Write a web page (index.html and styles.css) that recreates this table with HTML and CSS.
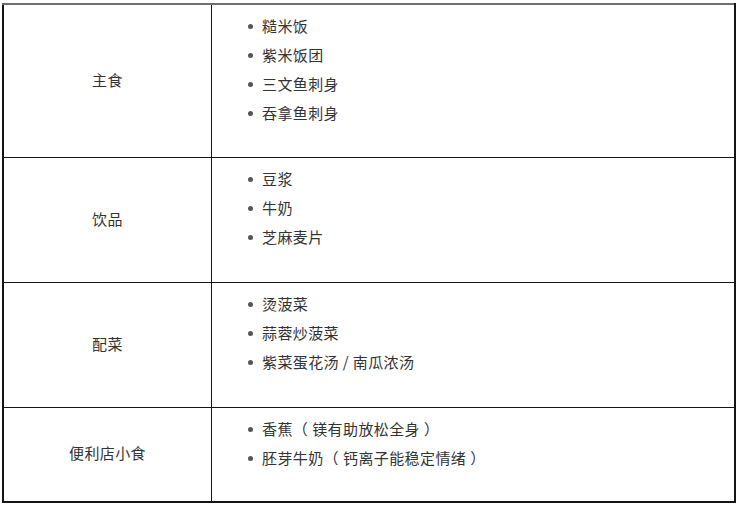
FILE: index.html
```html
<!DOCTYPE html>
<html lang="zh-CN">
<head>
<meta charset="utf-8">
<link rel="stylesheet" href="styles.css">
</head>
<body>
<div class="wrap">
<table class="menu">
  <tr>
    <td class="cat">主食</td>
    <td class="items">
      <ul class="first">
        <li>糙米饭</li>
        <li>紫米饭团</li>
        <li>三文鱼刺身</li>
        <li>吞拿鱼刺身</li>
      </ul>
    </td>
  </tr>
  <tr>
    <td class="cat">饮品</td>
    <td class="items">
      <ul>
        <li>豆浆</li>
        <li>牛奶</li>
        <li>芝麻麦片</li>
      </ul>
    </td>
  </tr>
  <tr>
    <td class="cat">配菜</td>
    <td class="items">
      <ul>
        <li>烫菠菜</li>
        <li>蒜蓉炒菠菜</li>
        <li>紫菜蛋花汤 / 南瓜浓汤</li>
      </ul>
    </td>
  </tr>
  <tr>
    <td class="cat">便利店小食</td>
    <td class="items">
      <ul class="last">
        <li>香蕉<span class="po">（</span>镁有助放松全身<span class="pc">）</span></li>
        <li>胚芽牛奶<span class="po">（</span>钙离子能稳定情绪<span class="pc">）</span></li>
      </ul>
    </td>
  </tr>
</table>
</div>
</body>
</html>
```
FILE: styles.css
```css
html, body {
  margin: 0;
  padding: 0;
  background: #fff;
}
.wrap {
  padding: 3px 0 0 2px;
}
.menu {
  width: 734px;
  border-collapse: collapse;
  border: 2px solid #141414;
  border-top-color: #6e6e6e;
  font-family: "Noto Sans CJK SC", "Noto Sans", sans-serif;
  font-size: 15px;
  color: #333;
  letter-spacing: 0.4px;
}
.menu td {
  border: 1px solid #141414;
  padding: 0;
}
.menu td.cat {
  width: 207px;
  text-align: center;
  vertical-align: middle;
  padding-bottom: 4px;
}
.items {
  vertical-align: top;
}
.items ul {
  list-style: none;
  margin: 6px 0 31px 0;
  padding: 0 0 0 50px;
}
.items ul.first {
  margin-bottom: 30px;
}
.items ul.last {
  margin-bottom: 29px;
}
.items li {
  position: relative;
  line-height: 29px;
  height: 29px;
}
.items li::before {
  content: "";
  position: absolute;
  left: -14px;
  top: 13px;
  width: 5px;
  height: 5px;
  border-radius: 50%;
  background: #555;
}
.po {
  padding: 0 4px 0 0;
}
.pc {
  padding: 0 0 0 4px;
}
```
